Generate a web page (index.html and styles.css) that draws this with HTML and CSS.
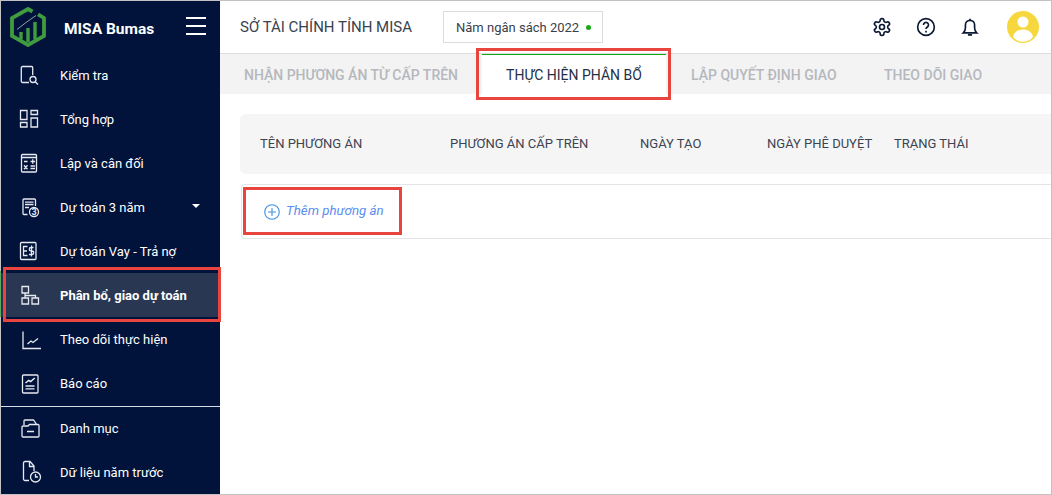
FILE: index.html
```html
<!DOCTYPE html>
<html lang="vi">
<head>
<meta charset="utf-8">
<title>MISA Bumas</title>
<link rel="stylesheet" href="styles.css">
</head>
<body>
<div class="app">
  <aside class="sidebar">
    <div class="brand">
      <svg class="logo" width="36" height="40" viewBox="0 0 36 40" fill="none">
        <path d="M28 7.300 34 11V29L18 38 2 29V11L18 2 22.500 4.500" stroke="#3f9c3f" stroke-width="3.800"/>
        <path d="M11 32.500V25M18 35V21M25 32.500V15" stroke="#3f9c3f" stroke-width="3.400"/>
        <path d="M6.500 24 16 17 27 9.500" stroke="#01133b" stroke-width="1.500"/>
        <path d="M7 22.500 16 15.500 26 8.500" stroke="#b8c4b8" stroke-width=".8"/>
      </svg>
      <span class="brand-name">MISA Bumas</span>
      <div class="burger"><i></i><i></i><i></i></div>
    </div>
    <nav class="menu">
      <a class="item"><svg class="ic" viewBox="0 0 20 20"><path d="M10 17.500H3.500a1.200 1.200 0 0 1-1.200-1.200V2.700a1.200 1.200 0 0 1 1.200-1.200h9a1.200 1.200 0 0 1 1.200 1.200V10"/><circle cx="14" cy="14.500" r="3"/><path d="m16.200 16.700 2.800 2.800"/></svg><span>Kiểm tra</span></a>
      <a class="item"><svg class="ic" viewBox="0 0 20 20"><path d="M1.500 1.500h6.500v9H1.500zM12 1.500h6.500v4H12zM1.500 13.500H8v4.500H1.500zM12 9h6.500v9H12z"/></svg><span>Tổng hợp</span></a>
      <a class="item"><svg class="ic" viewBox="0 0 20 20"><rect x="2.500" y="1.500" width="15" height="17.500" rx="1"/><path d="M2.500 4.500h15M5 8.500h3.500M11.500 8.500h4.500M13.750 6.200v4.600M5 12.200l3.500 4M8.500 12.200l-3.500 4M11.500 13h4.500M11.500 15.500h4.500"/></svg><span>Lập và cân đối</span></a>
      <a class="item"><svg class="ic" viewBox="0 0 20 20"><path d="M8.500 17.500H5a1 1 0 0 1-1-1V3a1 1 0 0 1 1-1h10.500a1 1 0 0 1 1 1v6M6 5.200h8.500M6 7.500h8.500M6 10.500h4"/><circle cx="15" cy="15" r="4.500"/><text x="15" y="18.200" class="ic-num">3</text></svg><span>Dự toán 3 năm</span><b class="caret"></b></a>
      <a class="item"><svg class="ic" viewBox="0 0 20 20"><rect x="1.500" y="1.500" width="15.500" height="17" rx="1"/><path d="M8.500 5.500H4.500v9h4M4.500 10H8M14.500 6.500h-2.500a1.600 1.600 0 0 0 0 3.500h1a1.600 1.600 0 0 1 0 3.500h-3M12.500 4.500v11"/></svg><span>Dự toán Vay - Trả nợ</span></a>
      <a class="item active"><svg class="ic" viewBox="0 0 20 20"><path d="M3 1.500h6.500V8H3zM3 13h6.500v6H3zM13 13h6.500v6H13zM6 8v5M6 10.500h10.500V13"/></svg><span>Phân bổ, giao dự toán</span></a>
      <a class="item"><svg class="ic" viewBox="0 0 20 20"><path d="M4 2.500V19.500H22M8.500 15l3.500-3 2 1.500 5-4"/></svg><span>Theo dõi thực hiện</span></a>
      <a class="item"><svg class="ic" viewBox="0 0 20 20"><rect x="3.500" y="2" width="15.500" height="18" rx="1"/><path d="M6.500 10l3.200-2.500 2 1 4-3.500" stroke-width="1.500"/><path d="M6.500 13h9M6.500 15.800h9"/></svg><span>Báo cáo</span></a>
    </nav>
    <nav class="menu menu-bottom">
      <a class="item"><svg class="ic" viewBox="0 0 20 20"><path d="M5 7V3a1 1 0 0 1 1-1h8.500l3.500 5M3 9a1 1 0 0 1 1-1h5l1.500-1.500H19a1 1 0 0 1 1 1V18a1 1 0 0 1-1 1H4a1 1 0 0 1-1-1zM8 13.500h7"/></svg><span>Danh mục</span></a>
      <a class="item"><svg class="ic" viewBox="0 0 20 20"><path d="M10 18.500H6a1.500 1.500 0 0 1-1.500-1.500V1A1.500 1.500 0 0 1 6-.5h5l4 4.500V9M10.500-.5V4.500h4.500"/><circle cx="16.500" cy="15" r="5"/><path d="M16.500 12v3h2.500"/></svg><span>Dữ liệu năm trước</span></a>
    </nav>
  </aside>

  <main class="content">
    <header class="topbar">
      <h1 class="org">SỞ TÀI CHÍNH TỈNH MISA</h1>
      <div class="year">Năm ngân sách 2022<i class="dot"></i></div>
      <div class="tools">
        <svg class="tool" viewBox="0 0 24 24"><path d="M12.220 2h-.44a2 2 0 0 0-2 2v.18a2 2 0 0 1-1 1.730l-.43.25a2 2 0 0 1-2 0l-.15-.08a2 2 0 0 0-2.730.73l-.22.38a2 2 0 0 0 .73 2.730l.15.1a2 2 0 0 1 1 1.720v.51a2 2 0 0 1-1 1.740l-.15.09a2 2 0 0 0-.73 2.730l.22.38a2 2 0 0 0 2.730.73l.15-.08a2 2 0 0 1 2 0l.43.25a2 2 0 0 1 1 1.730V20a2 2 0 0 0 2 2h.44a2 2 0 0 0 2-2v-.18a2 2 0 0 1 1-1.730l.43-.25a2 2 0 0 1 2 0l.15.08a2 2 0 0 0 2.730-.73l.22-.39a2 2 0 0 0-.73-2.730l-.15-.08a2 2 0 0 1-1-1.740v-.5a2 2 0 0 1 1-1.740l.15-.09a2 2 0 0 0 .73-2.730l-.22-.38a2 2 0 0 0-2.730-.73l-.15.08a2 2 0 0 1-2 0l-.43-.25a2 2 0 0 1-1-1.730V4a2 2 0 0 0-2-2z"/><circle cx="12" cy="12" r="3"/></svg>
        <svg class="tool" viewBox="0 0 24 24"><circle cx="12" cy="12" r="10"/><path d="M9 9.500a3 3 0 1 1 4.600 2.500c-1.100.7-1.600 1.200-1.600 2.500"/><path d="M12 16.500v2"/></svg>
        <svg class="tool" viewBox="0 0 24 24"><path d="M4 19c1.800-1.500 2.500-3 2.500-6V9.500a5.500 5.500 0 0 1 11 0V13c0 3 .7 4.500 2.500 6zM9.500 21.500h5M12 2v2"/></svg>
        <div class="avatar"><svg width="32" height="32" viewBox="0 0 32 32"><circle cx="16" cy="11" r="5.500" fill="#fff"/><path d="M6 26c1-5 5-7.500 10-7.500S25 21 26 26a13 13 0 0 1-20 0z" fill="#fff"/></svg></div>
      </div>
    </header>

    <div class="tabs">
      <a class="tab tab-1">NHẬN PHƯƠNG ÁN TỪ CẤP TRÊN</a>
      <a class="tab tab-current">THỰC HIỆN PHÂN BỔ</a>
      <a class="tab tab-3">LẬP QUYẾT ĐỊNH GIAO</a>
      <a class="tab tab-4">THEO DÕI GIAO</a>
    </div>

    <section class="panel">
      <div class="thead">
        <span class="c1">TÊN PHƯƠNG ÁN</span>
        <span class="c2">PHƯƠNG ÁN CẤP TRÊN</span>
        <span class="c3">NGÀY TẠO</span>
        <span class="c4">NGÀY PHÊ DUYỆT</span>
        <span class="c5">TRẠNG THÁI</span>
      </div>
      <div class="add-row">
        <svg class="plus" width="16" height="16" viewBox="0 0 16 16"><circle cx="8" cy="8" r="7.300"/><path d="M8 4v8M4 8h8"/></svg>
        <span class="add-text">Thêm phương án</span>
      </div>
    </section>
  </main>
</div>
<div class="mark mark-side"></div>
<div class="mark mark-tab"></div>
<div class="mark mark-add"></div>
</body>
</html>
```

FILE: styles.css
```css
* { box-sizing: border-box; }
html, body { margin: 0; padding: 0; height: 100%; overflow: hidden; }
body { font-family: Roboto, "Liberation Sans", sans-serif; background: #fff; color: #1f2a44; position: relative; }

.app { display: flex; width: 1052px; height: 495px; border: 1px solid #c2c2c2; }

.sidebar { width: 219px; flex: none; background: #01133b; color: #fff; display: flex; flex-direction: column; }
.brand { height: 54px; display: flex; align-items: center; padding-left: 9px; }
.logo { flex: none; margin-top: -1px; }
.brand-name { font-size: 15.500px; font-weight: 700; margin-left: 18px; width: 122px; margin-top: 3px; }
.burger { display: flex; flex-direction: column; gap: 6px; margin-top: -2px; }
.burger i { display: block; width: 20px; height: 2px; background: #fff; }

.menu { display: flex; flex-direction: column; }
.menu-bottom { border-top: 1px solid #d8dce4; margin-top: 1px; }
.menu-bottom .item:first-child { margin-top: -1px; }
.item { height: 44px; display: flex; align-items: center; padding-left: 18px; font-size: 13px; color: #fff; position: relative; }
.item span { margin-left: 21px; }
.item.active { background: #2a3753; font-weight: 700; }
.item.active::before { content: ""; position: absolute; left: -1px; top: -2px; bottom: 0; width: 1px; background: #5fa85f; }
.ic { width: 20px; height: 20px; flex: none; fill: none; stroke: #e6e9ef; stroke-width: 1.300; overflow: visible; }
.ic-num { font: 700 9px Roboto, sans-serif; text-anchor: middle; fill: #e6e9ef; stroke: none; }
.caret { position: absolute; left: 191px; top: 19px; width: 0; height: 0; border-left: 4px solid transparent; border-right: 4px solid transparent; border-top: 4px solid #fff; }

.content { flex: 1; min-width: 0; display: flex; flex-direction: column; }
.topbar { height: 53px; display: flex; align-items: center; padding-left: 20px; border-bottom: 1px solid #dcdcdc; }
.org { font-size: 15px; font-weight: 400; margin: 0; color: #39424f; width: 203px; }
.year { height: 32px; width: 160px; border: 1px solid #dcdcdc; display: flex; align-items: center; padding-left: 12px; font-size: 13px; color: #3a3f4a; }
.dot { width: 5px; height: 5px; border-radius: 50%; background: #19a919; margin-left: 7px; }
.tools { margin-left: auto; display: flex; align-items: center; padding-right: 12px; }
.tool { width: 20px; height: 20px; fill: none; stroke: #0d1a36; stroke-width: 2; margin-right: 24px; }
.tool:nth-child(3) { margin-right: 27px; }
.avatar { width: 32px; height: 32px; border-radius: 50%; background: #f6d83e; overflow: hidden; }

.tabs { height: 40px; background: #f3f3f3; display: flex; align-items: stretch; font-size: 14px; font-weight: 500; color: #b5b8bd; }
.tab { display: flex; align-items: center; padding-top: 2px; }
.tab-1 { margin-left: 24px; width: 238px; }
.tab-current { width: 184px; background: #fff; border-top: 1px solid #11a911; color: #252f45; font-weight: 400; justify-content: center; padding-top: 0; }
.tab-3 { margin-left: 25px; width: 193px; }
.tab-4 { width: 110px; }

.panel { flex: 1; padding: 20px 0 0 20px; }
.thead { height: 60px; background: #f5f5f5; border-radius: 6px 0 0 6px; display: flex; align-items: center; font-size: 13px; color: #3c4452; padding-bottom: 2px; }
.thead span { flex: none; }
.c1 { margin-left: 20px; width: 190px; }
.c2 { width: 190px; }
.c3 { width: 127px; }
.c4 { width: 127px; }
.add-row { margin: 10px 0 0 1px; height: 55px; border: 1px solid #e2e4e8; border-right: 0; border-radius: 4px 0 0 4px; display: flex; align-items: center; padding-left: 22px; }
.plus { fill: none; stroke: #3d92e0; stroke-width: 1.100; }
.add-text { margin-left: 6px; font-size: 13.300px; font-style: italic; color: #5c8df0; margin-top: -2px; }

.mark { position: absolute; border: 3px solid #e8453f; pointer-events: none; }
.mark-side { left: 3px; top: 267px; width: 218px; height: 55px; }
.mark-tab { left: 476px; top: 48px; width: 195px; height: 52px; }
.mark-add { left: 243px; top: 187px; width: 159px; height: 48px; }
```
